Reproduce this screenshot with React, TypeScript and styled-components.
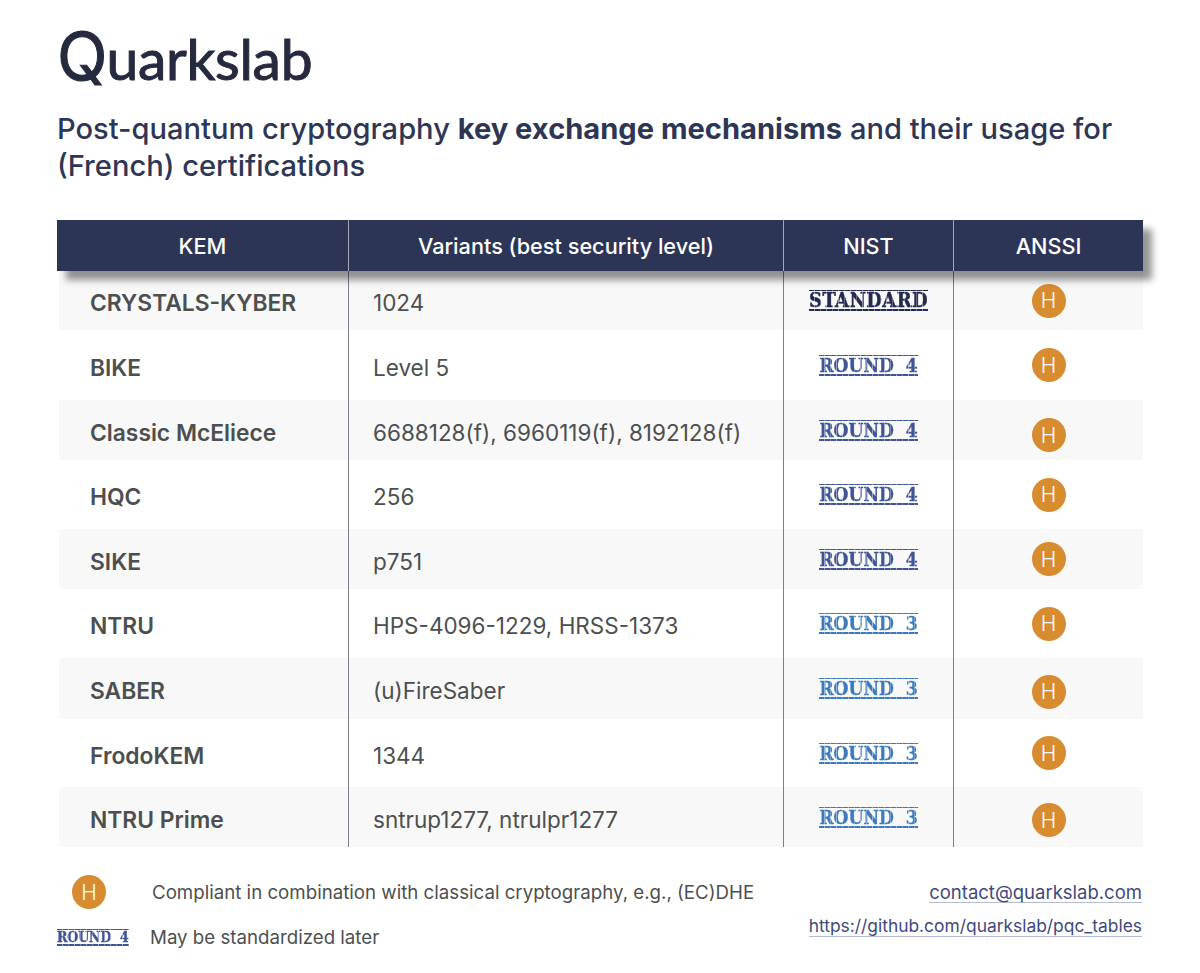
import * as React from "react";
import styled, { createGlobalStyle } from "styled-components";

const GlobalStyle = createGlobalStyle`
  html, body {
    margin: 0;
    padding: 0;
    background: #fff;
  }
`;

const Page = styled.div`
  box-sizing: border-box;
  width: 1200px;
  height: 973px;
  padding: 17px 57px 0;
  overflow: hidden;
  font-family: "Inter", "Lato", sans-serif;
  color: #4a4a4a;
`;

const Logo = styled.div`
  font-family: "Lato", sans-serif;
  font-size: 57px;
  line-height: 78px;
  font-weight: 400;
  letter-spacing: -0.3px;
  color: #252a3f;
  -webkit-text-stroke: 1px #252a3f;

  span {
    font-family: "Inter", sans-serif;
    font-size: 66px;
    font-weight: 400;
    letter-spacing: -1px;
  }
`;

const Title = styled.h1`
  margin: 13px 0 0;
  font-size: 29.1px;
  line-height: 37px;
  font-weight: 500;
  color: #2e3655;

  b {
    font-weight: 700;
  }
`;

const Table = styled.div`
  margin-top: 36px;
  width: 1086px;
`;

const Head = styled.div`
  position: relative;
  z-index: 1;
  display: grid;
  grid-template-columns: 291px 435px 170px 190px;
  height: 51px;
  background: #2c3556;
  box-shadow: 9px 9px 7px rgba(0, 0, 0, 0.42);
`;

const HeadCell = styled.div<{ $first?: boolean }>`
  display: flex;
  align-items: center;
  justify-content: center;
  font-size: 21.7px;
  font-weight: 500;
  color: #fff;
  border-left: ${(p) => (p.$first ? "none" : "1px solid #a4a8b6")};
`;

const Row = styled.div<{ $height: number; $shaded: boolean }>`
  display: grid;
  grid-template-columns: 289px 435px 170px 190px;
  margin-left: 2px;
  height: ${(p) => p.$height}px;
  background: ${(p) => (p.$shaded ? "#f8f8f8" : "#fff")};
`;

const Name = styled.div`
  display: flex;
  align-items: center;
  padding: 4px 0 0 31px;
  font-size: 22.8px;
  font-weight: 600;
  color: #4d4f4f;
`;

const Variant = styled.div`
  display: flex;
  align-items: center;
  padding: 4px 0 0 24px;
  font-size: 22.5px;
  color: #4d4f4f;
  border-left: 1px solid #7c7c92;
`;

const Centered = styled.div`
  display: flex;
  align-items: center;
  justify-content: center;
  border-left: 1px solid #7c7c92;
`;

const Stamp = styled.span<{ $color: string; $small?: boolean; $wide?: boolean }>`
  display: inline-block;
  font-family: "DejaVu Serif Condensed", "DejaVu Serif", serif;
  font-weight: 700;
  font-size: ${(p) => (p.$small ? 14 : p.$wide ? 20 : 19)}px;
  line-height: ${(p) => (p.$small ? 14 : 18)}px;
  letter-spacing: ${(p) => (p.$small ? -0.1 : p.$wide ? 0.4 : 0)}px;
  white-space: pre;
  color: ${(p) => p.$color};
  -webkit-text-stroke: 0.4px ${(p) => p.$color};
  border-top: 1px solid ${(p) => p.$color};
  border-bottom: 2px solid ${(p) => p.$color};
  mask-image: repeating-linear-gradient(
    90deg,
    #000 0 5px,
    rgba(0, 0, 0, 0.55) 5px 6px,
    #000 6px 11px,
    rgba(0, 0, 0, 0.7) 11px 12px
  );
`;

const Hybrid = styled.span<{ $shift?: number }>`
  display: flex;
  align-items: center;
  justify-content: center;
  width: 34px;
  height: 34px;
  margin-top: ${(p) => (p.$shift ?? 0) * 2}px;
  border-radius: 50%;
  background: #d68c2f;
  color: #fff;
  font-size: 21px;
  font-weight: 300;
`;

const Footer = styled.div`
  display: flex;
  justify-content: space-between;
  margin-top: 28px;
  width: 1086px;
`;

const Legend = styled.div`
  display: grid;
  grid-template-columns: 93px auto;
  grid-template-rows: 34px 28px;
  row-gap: 14px;
  align-items: center;
  font-size: 18.7px;
  color: #4d4f4f;
`;

const LegendMark = styled.div<{ $indent?: number }>`
  display: flex;
  padding-left: ${(p) => p.$indent ?? 0}px;
`;

const LegendNote = styled.span<{ $indent?: number }>`
  padding-left: ${(p) => p.$indent ?? 0}px;
`;

const Links = styled.div`
  display: flex;
  flex-direction: column;
  align-items: flex-end;
  gap: 13px;
  padding-top: 7px;
  margin-right: 1px;
`;

const Link = styled.a<{ $size: number }>`
  font-size: ${(p) => p.$size}px;
  line-height: 20px;
  color: #3f4a7d;
  text-decoration: none;
  border-bottom: 1px solid #b4bbd6;
`;

const rows = [
  ["CRYSTALS-KYBER", "1024", "STANDARD", 59, 0],
  ["BIKE", "Level 5", "ROUND  4", 70, 0],
  ["Classic McEliece", "6688128(f), 6960119(f), 8192128(f)", "ROUND  4", 60, 5],
  ["HQC", "256", "ROUND  4", 69, 0],
  ["SIKE", "p751", "ROUND  4", 60, 0],
  ["NTRU", "HPS-4096-1229, HRSS-1373", "ROUND  3", 69, 0],
  ["SABER", "(u)FireSaber", "ROUND  3", 61, 3],
  ["FrodoKEM", "1344", "ROUND  3", 68, 0],
  ["NTRU Prime", "sntrup1277, ntrulpr1277", "ROUND  3", 60, 3],
] as const;

const stampColor = (label: string) => {
  if (label === "STANDARD") return "#232a4f";
  return label.endsWith("4") ? "#3f5596" : "#3b7bbd";
};

export default function App() {
  return (
    <Page>
      <GlobalStyle />
      <Logo>
        <span>Q</span>uarkslab
      </Logo>
      <Title>
        Post-quantum cryptography <b>key exchange mechanisms</b> and their usage for
        <br />
        (French) certifications
      </Title>
      <Table>
        <Head>
          <HeadCell $first>KEM</HeadCell>
          <HeadCell>Variants (best security level)</HeadCell>
          <HeadCell>NIST</HeadCell>
          <HeadCell>ANSSI</HeadCell>
        </Head>
        {rows.map(([name, variant, stamp, height, shift], i) => (
          <Row key={name} $height={height} $shaded={i % 2 === 0}>
            <Name>{name}</Name>
            <Variant>{variant}</Variant>
            <Centered>
              <Stamp $color={stampColor(stamp)} $wide={stamp === "STANDARD"}>
                {stamp}
              </Stamp>
            </Centered>
            <Centered>
              <Hybrid $shift={shift}>H</Hybrid>
            </Centered>
          </Row>
        ))}
      </Table>
      <Footer>
        <Legend>
          <LegendMark $indent={15}>
            <Hybrid>H</Hybrid>
          </LegendMark>
          <LegendNote $indent={2}>
            Compliant in combination with classical cryptography, e.g., (EC)DHE
          </LegendNote>
          <LegendMark>
            <Stamp $color="#3f5596" $small>
              ROUND  4
            </Stamp>
          </LegendMark>
          <LegendNote>May be standardized later</LegendNote>
        </Legend>
        <Links>
          <Link $size={18.5}>contact@quarkslab.com</Link>
          <Link $size={17.4}>https://github.com/quarkslab/pqc_tables</Link>
        </Links>
      </Footer>
    </Page>
  );
}
